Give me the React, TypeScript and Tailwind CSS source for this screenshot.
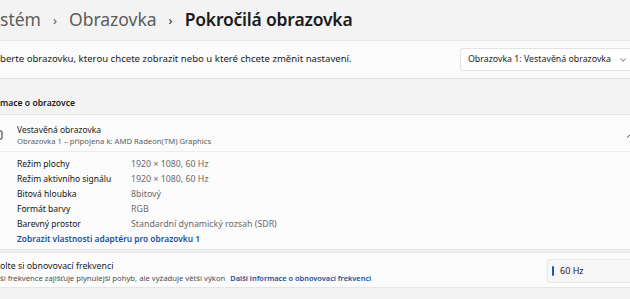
// App.tsx — Windows 11 Settings "Pokročilá obrazovka" page (cropped view).
const FONT = "font-['Segoe_UI','Noto_Sans',sans-serif]";

const ROWS = [
  { label: "Režim plochy", value: "1920 × 1080, 60 Hz" },
  { label: "Režim aktivního signálu", value: "1920 × 1080, 60 Hz" },
  { label: "Bitová hloubka", value: "8bitový" },
  { label: "Formát barvy", value: "RGB" },
  { label: "Barevný prostor", value: "Standardní dynamický rozsah (SDR)" },
];

function Chevron({ dir = "down", className = "" }: { dir?: "down" | "up"; className?: string }) {
  return (
    <svg width="8" height="8" viewBox="0 0 8 8" className={className} fill="none">
      <path
        d={dir === "down" ? "M1.5 2.8 4 5.2 6.5 2.8" : "M1.5 5.2 4 2.8 6.5 5.2"}
        stroke="currentColor"
        strokeWidth="1"
        strokeLinecap="round"
        strokeLinejoin="round"
      />
    </svg>
  );
}

export default function App() {
  return (
    <div className={`h-[299px] w-[630px] overflow-hidden bg-[#f3f3f3] text-[#1b1b1b] ${FONT}`}>
      {/* breadcrumb */}
      <div className="flex h-[40px] items-center whitespace-nowrap text-[17.5px] leading-none">
        <span className="text-[#5c5c5c]">stém</span>
        <span className="mx-[12px] text-[13px] text-[#5c5c5c]">›</span>
        <span className="text-[#5c5c5c]">Obrazovka</span>
        <span className="mx-[12px] text-[13px] text-[#1b1b1b]">›</span>
        <span className="font-semibold tracking-[-0.2px] text-[#1b1b1b]">Pokročilá obrazovka</span>
      </div>

      {/* choose display */}
      <div className="-mr-[10px] flex h-[39px] items-center border-y border-[#e6e6e6] bg-[#fbfbfb] whitespace-nowrap">
        <span className="text-[9.6px]">berte obrazovku, kterou chcete zobrazit nebo u které chcete změnit nastavení.</span>
        <div className="ml-auto flex h-[23px] w-[180px] items-center gap-[8px] rounded-[3px] border border-[#e3e3e3] bg-white pl-[7px] text-[8.8px]">
          <span>Obrazovka 1: Vestavěná obrazovka</span>
          <Chevron className="text-[#6b6b6b]" />
        </div>
      </div>

      {/* section title */}
      <div className="flex h-[35px] items-center pt-[13px] text-[8.6px] font-semibold">mace o obrazovce</div>

      {/* display info card */}
      <div className="-mr-[10px] border-y border-[#e6e6e6] bg-[#fbfbfb] whitespace-nowrap">
        <div className="flex h-[37px] items-center border-b border-[#ececec] pt-[5px]">
          <svg width="14" height="12" viewBox="0 0 14 12" className="-ml-[11px] text-[#2b2b2b]" fill="none">
            <rect x="1" y="1" width="12" height="8" rx="1" stroke="currentColor" strokeWidth="1" />
            <path d="M5 11h4" stroke="currentColor" strokeWidth="1" strokeLinecap="round" />
          </svg>
          <div className="ml-[14px] flex flex-col leading-[10.5px]">
            <span className="text-[8.5px]">Vestavěná obrazovka</span>
            <span className="text-[7.7px] text-[#5f5f5f]">Obrazovka 1 – připojena k: AMD Radeon(TM) Graphics</span>
          </div>
          <Chevron dir="up" className="ml-auto mr-[6px] text-[#3a3a3a]" />
        </div>
        <div className="flex flex-col pb-[2px] pl-[17px] pt-[5px] leading-none">
          {ROWS.map((r) => (
            <div key={r.label} className="flex h-[15px] items-center">
              <span className="w-[114px] text-[8.5px] text-[#141414]">{r.label}</span>
              <span className="text-[8.8px] text-[#6a6a6a]">{r.value}</span>
            </div>
          ))}
          <div className="flex h-[15px] items-center text-[8.4px] font-semibold text-[#1c4f9a]">
            Zobrazit vlastnosti adaptéru pro obrazovku 1
          </div>
        </div>
      </div>

      {/* refresh rate card */}
      <div className="-mr-[10px] mt-[2px] flex h-[36px] items-center border-y border-[#e6e6e6] bg-[#fbfbfb] pt-[5px] whitespace-nowrap">
        <div className="flex flex-col leading-[11.5px]">
          <span className="text-[8.8px]">olte si obnovovací frekvenci</span>
          <span className="text-[7.7px] text-[#4f4f4f]">
            ší frekvence zajišťuje plynulejší pohyb, ale vyžaduje větší výkon
            <span className="ml-[5px] text-[7.4px] font-semibold text-[#1c4f9a]">Další informace o obnovovací frekvenci</span>
          </span>
        </div>
        <div className="ml-auto -mt-[3px] flex h-[24px] w-[93px] items-center rounded-[3px] border border-[#e6e6e6] bg-[#f6f6f6] pl-[4px] text-[9px]">
          <span className="mr-[6px] h-[10px] w-[2px] rounded-full bg-[#1a56b0]" />
          <span>60 Hz</span>
        </div>
      </div>
    </div>
  );
}
